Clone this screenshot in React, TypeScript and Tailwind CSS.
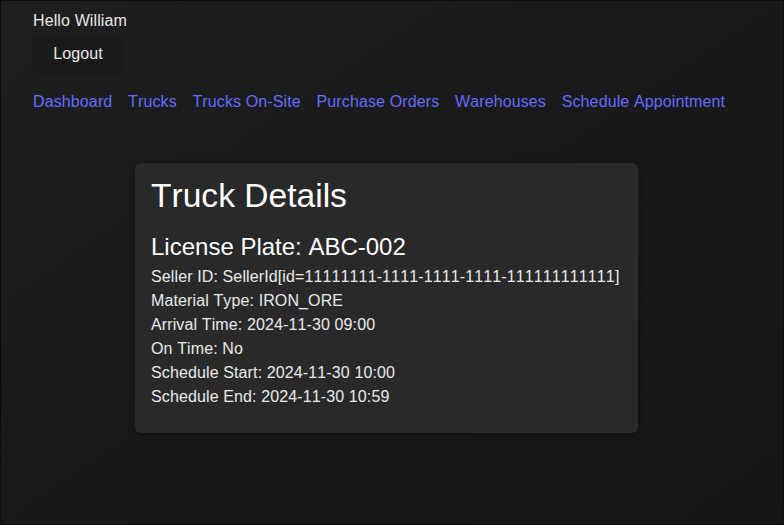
const details = [
  { label: 'Seller ID', value: 'SellerId[id=11111111-1111-1111-1111-111111111111]' },
  { label: 'Material Type', value: 'IRON_ORE' },
  { label: 'Arrival Time', value: '2024-11-30 09:00' },
  { label: 'On Time', value: 'No' },
  { label: 'Schedule Start', value: '2024-11-30 10:00' },
  { label: 'Schedule End', value: '2024-11-30 10:59' },
]

const links = ['Dashboard', 'Trucks', 'Trucks On-Site', 'Purchase Orders', 'Warehouses', 'Schedule Appointment']

export default function App() {
  return (
    <div className="h-screen border border-[#0d0d0d] bg-linear-to-br from-[#1e1e1e] to-[#141414] px-8 pt-2 font-[Liberation_Sans,Arial,sans-serif] text-[16px] leading-6 tracking-[0.12px] text-white/90 [font-kerning:none]">
      <div>Hello William</div>
      <button className="mt-[3px] rounded-lg border border-transparent bg-[#1a1a1a] px-[19.2px] pb-[11px] pt-[8px] font-[Liberation_Sans,Arial,sans-serif] leading-[18.4px] tracking-[0.12px] text-white/90 [font-kerning:none]">
        Logout
      </button>

      <nav className="mt-[15px] flex gap-[15.7px]">
        {links.map((l) => (
          <a key={l} href="#" className="text-[#646cff]">
            {l}
          </a>
        ))}
      </nav>

      <div className="ml-[102px] mt-[49px] w-[503px] rounded-md bg-[#292929] px-4 pb-[24px] pt-[14px] shadow-[0_2px_6px_rgba(0,0,0,0.35)]">
        <h1 className="text-[33.6px] leading-[37px] tracking-normal text-white">Truck Details</h1>
        <h2 className="mt-[15px] text-[24px] leading-9 tracking-normal text-white">License Plate: ABC-002</h2>
        {details.map((d) => (
          <p key={d.label}>
            {d.label}: {d.value}
          </p>
        ))}
      </div>
    </div>
  )
}
